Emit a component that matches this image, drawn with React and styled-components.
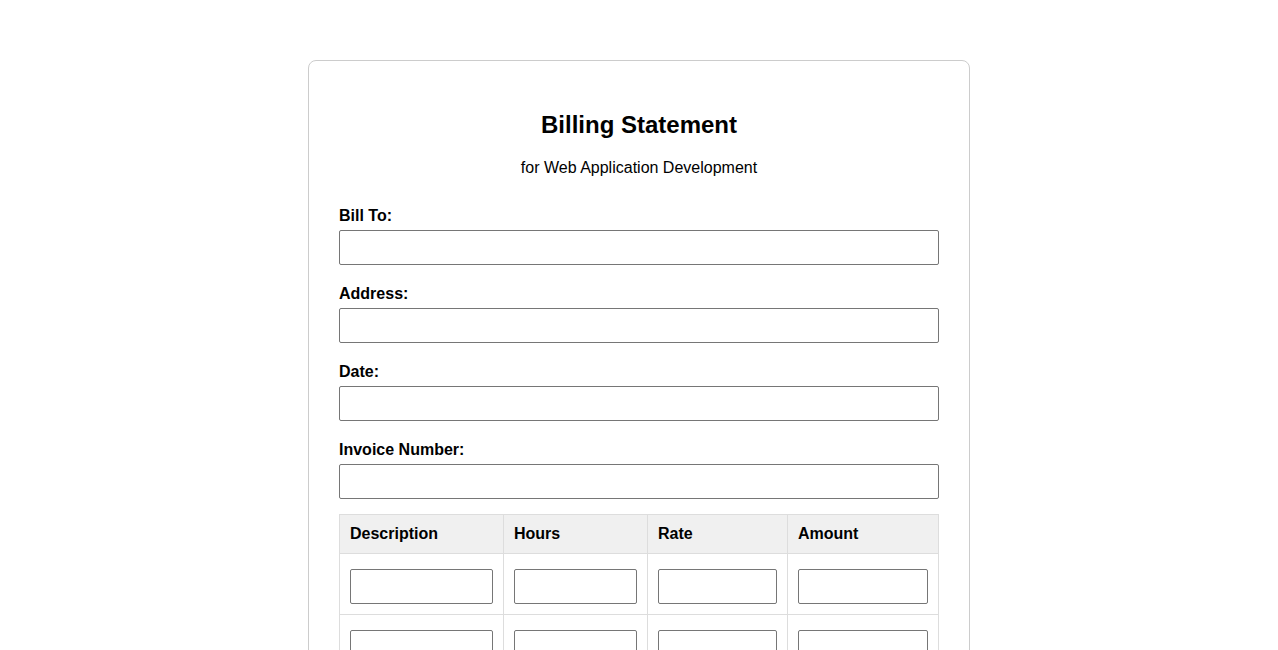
import React from "react";
import styled, { createGlobalStyle } from "styled-components";

const GlobalStyle = createGlobalStyle`
body{
    margin:0;
    background:#fff;
    font-family:"Liberation Sans", Arial, sans-serif;
    color:#000;
}
`

const columns = [
    { title: "Description", width: 164 },
    { title: "Hours", width: 144 },
    { title: "Rate", width: 140 },
    { title: "Amount", width: 151 },
];

const fields = ["Bill To:", "Address:", "Date:", "Invoice Number:"];

const App = () => {
    return (
        <>
            <GlobalStyle />
            <Card>
                <Title>Billing Statement</Title>
                <Subtitle>for Web Application Development</Subtitle>
                <form>
                    {fields.map((f) => (
                        <Field key={f}>
                            <Label>{f}</Label>
                            <Input type="text" />
                        </Field>
                    ))}
                    <Table>
                        <colgroup>
                            {columns.map((c) => (
                                <col key={c.title} style={{ width: c.width }} />
                            ))}
                        </colgroup>
                        <thead>
                            <tr>
                                {columns.map((c) => (
                                    <Th key={c.title}>{c.title}</Th>
                                ))}
                            </tr>
                        </thead>
                        <tbody>
                            {[0, 1, 2, 3].map((r) => (
                                <tr key={r}>
                                    {columns.map((c) => (
                                        <Td key={c.title}>
                                            <CellInput type="text" />
                                        </Td>
                                    ))}
                                </tr>
                            ))}
                        </tbody>
                    </Table>
                    <Field>
                        <Label>Total:</Label>
                        <Input type="text" />
                    </Field>
                </form>
            </Card>
        </>
    )
}

const Card = styled.div`
width:600px;
margin:60px auto;
padding:30px;
border:1px solid #cccccc;
border-radius:8px;
background:#fff;
`
const Title = styled.h2`
margin:20px 0;
font-size:24px;
line-height:28px;
font-weight:bold;
text-align:center;
`
const Subtitle = styled.p`
margin:0 0 25px;
font-size:16px;
line-height:18px;
text-align:center;
`
const Field = styled.div`
display:flex;
flex-direction:column;
margin-bottom:15px;
`
const Label = styled.label`
margin:5px 0;
font-size:16px;
line-height:18px;
font-weight:bold;
`
const Input = styled.input`
box-sizing:border-box;
width:100%;
height:35px;
padding:8px;
font-size:14px;
font-family:inherit;
border:1px solid #767676;
border-radius:2px;
outline:none;
`
const Table = styled.table`
width:100%;
border-collapse:collapse;
table-layout:fixed;
margin-bottom:20px;
`
const Th = styled.th`
padding:10px;
border:1px solid #dddddd;
background:#f0f0f0;
font-size:16px;
line-height:18px;
font-weight:bold;
text-align:left;
`
const Td = styled.td`
padding:10px;
border:1px solid #dddddd;
`
const CellInput = styled(Input)`
display:block;
margin-top:5px;
`

export default App;
